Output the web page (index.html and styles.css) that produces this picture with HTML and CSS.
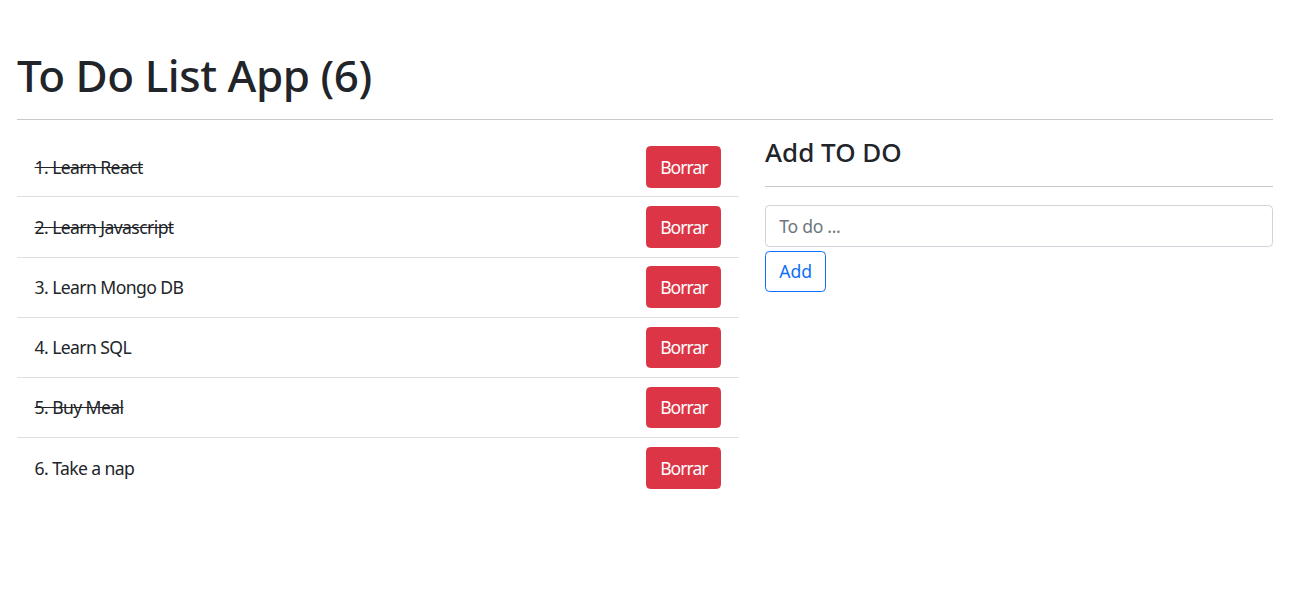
FILE: index.html
```html
<!DOCTYPE html>
<html lang="en">
<head>
<meta charset="utf-8">
<title>To Do List App</title>
<link rel="stylesheet" href="styles.css">
</head>
<body>
<div class="page">
  <h1 class="title">To Do List App (6)</h1>
  <hr class="rule">
  <div class="row">
    <ul class="todo-list">
      <li class="todo-item"><span class="todo-text done">1. Learn React</span><button class="btn btn-danger">Borrar</button></li>
      <li class="todo-item"><span class="todo-text done">2. Learn Javascript</span><button class="btn btn-danger">Borrar</button></li>
      <li class="todo-item"><span class="todo-text">3. Learn Mongo DB</span><button class="btn btn-danger">Borrar</button></li>
      <li class="todo-item"><span class="todo-text">4. Learn SQL</span><button class="btn btn-danger">Borrar</button></li>
      <li class="todo-item"><span class="todo-text done">5. Buy Meal</span><button class="btn btn-danger">Borrar</button></li>
      <li class="todo-item"><span class="todo-text">6. Take a nap</span><button class="btn btn-danger">Borrar</button></li>
    </ul>
    <div class="add-panel">
      <h4 class="add-title">Add TO DO</h4>
      <hr class="rule rule-small">
      <form class="add-form">
        <input class="form-control" type="text" placeholder="To do ...">
        <button class="btn btn-outline-primary" type="button">Add</button>
      </form>
    </div>
  </div>
</div>
</body>
</html>
```

FILE: styles.css
```css
* { box-sizing: border-box; }
body {
  margin: 0;
  font-family: "Noto Sans", "Open Sans", sans-serif;
  font-size: 17.6px;
  line-height: 1.5;
  color: #212529;
  background: #fff;
}
.page {
  padding: 0 16px 0 17px;
}
.title {
  font-size: 44px;
  font-weight: 500;
  line-height: 52.8px;
  letter-spacing: -0.45px;
  margin: 49px 0 17.4px;
}
.rule {
  margin: 0 0 17px;
  border: 0;
  border-top: 1px solid #c8c9ca;
  height: 0;
}
.rule-small {
  margin-bottom: 17.6px;
}
.row {
  display: grid;
  grid-template-columns: 721.7px 1fr;
  column-gap: 26.4px;
}
.todo-list {
  list-style: none;
  margin: 0;
  padding: 0;
}
.todo-item {
  display: flex;
  align-items: center;
  justify-content: space-between;
  padding: 8.8px 17.6px 8.8px 17.6px;
  border-bottom: 1px solid #dfdfdf;
  height: 60.2px;
}
.todo-item:last-child { border-bottom: 0; }
.todo-text { letter-spacing: -0.6px; }
.done { text-decoration: line-through; }
.btn {
  font-family: inherit;
  font-size: 17.6px;
  line-height: 26.4px;
  padding: 6.6px 13.2px;
  border: 1px solid transparent;
  border-radius: 4.4px;
  cursor: pointer;
}
.btn-danger {
  background: #dc3545;
  border-color: #dc3545;
  color: #fff;
  letter-spacing: -1px;
  padding: 6.6px 12.5px 6.6px 13.5px;
}
.btn-outline-primary {
  background: #fff;
  border-color: #0d6efd;
  color: #0d6efd;
  margin-top: 4px;
}
.add-title {
  font-size: 26px;
  font-weight: 500;
  line-height: 31.7px;
  margin: 0 0 17.6px;
}
.add-form {
  display: flex;
  flex-direction: column;
  align-items: flex-start;
}
.form-control {
  width: 100%;
  font-family: inherit;
  font-size: 17.6px;
  line-height: 26.4px;
  padding: 6.6px 13.2px;
  border: 1px solid #ced4da;
  border-radius: 4.4px;
  color: #212529;
  letter-spacing: -0.3px;
}
.form-control::placeholder { color: #6c757d; }
```
